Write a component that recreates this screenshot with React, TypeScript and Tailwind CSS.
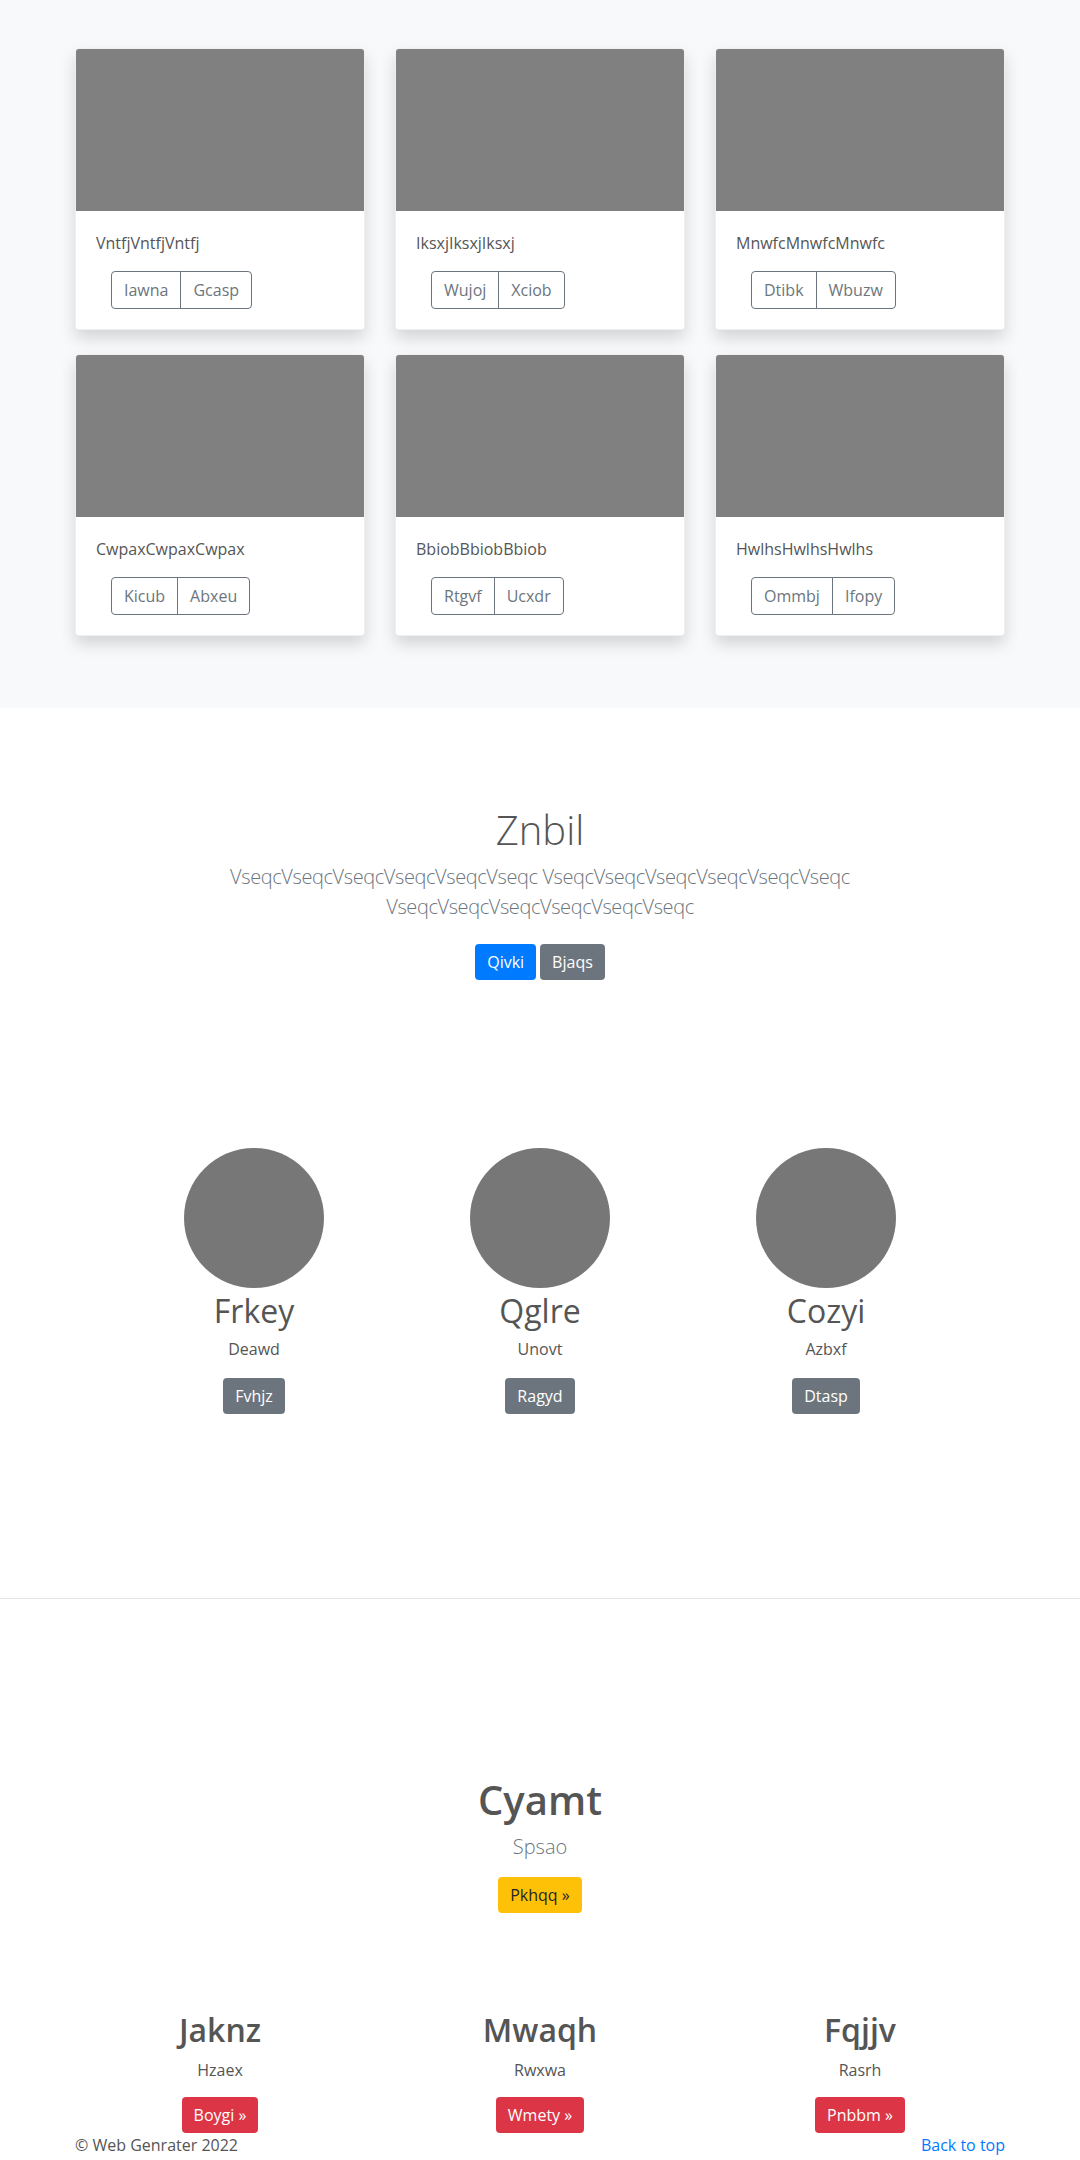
import React from 'react';

const cards = [
  { title: 'VntfjVntfjVntfj', a: 'Iawna', b: 'Gcasp' },
  { title: 'IksxjIksxjIksxj', a: 'Wujoj', b: 'Xciob' },
  { title: 'MnwfcMnwfcMnwfc', a: 'Dtibk', b: 'Wbuzw' },
  { title: 'CwpaxCwpaxCwpax', a: 'Kicub', b: 'Abxeu' },
  { title: 'BbiobBbiobBbiob', a: 'Rtgvf', b: 'Ucxdr' },
  { title: 'HwlhsHwlhsHwlhs', a: 'Ommbj', b: 'Ifopy' },
];

const people = [
  { name: 'Frkey', sub: 'Deawd', btn: 'Fvhjz' },
  { name: 'Qglre', sub: 'Unovt', btn: 'Ragyd' },
  { name: 'Cozyi', sub: 'Azbxf', btn: 'Dtasp' },
];

const features = [
  { name: 'Jaknz', sub: 'Hzaex', btn: 'Boygi »' },
  { name: 'Mwaqh', sub: 'Rwxwa', btn: 'Wmety »' },
  { name: 'Fqjjv', sub: 'Rasrh', btn: 'Pnbbm »' },
];

function AlbumCard({ title, a, b }: { title: string; a: string; b: string }) {
  return (
    <div className="mb-6 overflow-hidden rounded-[4px] border border-black/[0.06] bg-white shadow-[0_0.5rem_1rem_rgba(0,0,0,0.15)]">
      <div className="h-[162px] bg-[#808080]" />
      <div className="p-5">
        <p className="mb-4 text-base leading-6 text-[#555]">{title}</p>
        <div className="ml-[15px] inline-flex">
          <button className="rounded-l-[4px] border border-[#6c757d] px-3 py-1.5 text-base leading-6 text-[#6c757d]">
            {a}
          </button>
          <button className="-ml-px rounded-r-[4px] border border-[#6c757d] px-3 py-1.5 text-base leading-6 text-[#6c757d]">
            {b}
          </button>
        </div>
      </div>
    </div>
  );
}

export default function App() {
  return (
    <div className="min-h-[2160px] bg-white font-['Open_Sans',sans-serif] text-[#555]">
      {/* Album */}
      <section className="bg-[#f8f9fa] py-12">
        <div className="mx-auto grid w-[960px] grid-cols-3 gap-x-[30px] px-[15px]">
          {cards.map((c) => (
            <AlbumCard key={c.title} {...c} />
          ))}
        </div>
      </section>

      {/* Jumbotron */}
      <section className="pt-[98px] text-center">
        <h1 className="mb-2 text-[40px] font-light leading-[1.2] text-[#555]">Znbil</h1>
        <p className="mx-auto mb-[22px] max-w-[660px] text-xl font-light leading-[1.5] tracking-[-0.02em] text-[#6c757d]">
          VseqcVseqcVseqcVseqcVseqcVseqc VseqcVseqcVseqcVseqcVseqcVseqc VseqcVseqcVseqcVseqcVseqcVseqc
        </p>
        <div className="flex justify-center gap-1">
          <button className="rounded-[4px] bg-[#007bff] px-3 py-1.5 text-base leading-6 text-white">Qivki</button>
          <button className="rounded-[4px] bg-[#6c757d] px-3 py-1.5 text-base leading-6 text-white">Bjaqs</button>
        </div>
      </section>

      {/* Marketing circles */}
      <section className="mx-auto mt-[168px] grid w-[858px] grid-cols-3 text-center">
        {people.map((p) => (
          <div key={p.name} className="flex flex-col items-center">
            <div className="h-[140px] w-[140px] rounded-full bg-[#777]" />
            <h2 className="mt-1 mb-[7px] text-[32px] font-normal leading-[1.2] text-[#555]">{p.name}</h2>
            <p className="mb-[17px] text-base leading-6 text-[#555]">{p.sub}</p>
            <button className="rounded-[4px] bg-[#6c757d] px-3 py-1.5 text-base leading-6 text-white">{p.btn}</button>
          </div>
        ))}
      </section>

      <hr className="mt-[184px] border-t border-black/10" />

      {/* Call to action */}
      <section className="pt-[177px] text-center">
        <h1 className="mb-2 text-[40px] font-semibold leading-[1.2] text-[#555]">Cyamt</h1>
        <p className="mb-[15px] text-xl font-light leading-[1.5] text-[#6c757d]">Spsao</p>
        <button className="rounded-[4px] bg-[#ffc107] px-3 py-1.5 text-base leading-6 text-[#212529]">Pkhqq »</button>
      </section>

      <section className="mx-auto mt-[98px] grid w-[960px] grid-cols-3 text-center">
        {features.map((f) => (
          <div key={f.name} className="flex flex-col items-center px-[15px]">
            <h2 className="mb-2 text-[32px] font-semibold leading-[1.2] text-[#555]">{f.name}</h2>
            <p className="mb-[15px] text-base leading-6 text-[#555]">{f.sub}</p>
            <button className="rounded-[4px] bg-[#dc3545] px-3 py-1.5 text-base leading-6 text-white">{f.btn}</button>
          </div>
        ))}
      </section>

      <footer className="mx-auto flex w-[960px] justify-between px-[15px] text-base leading-6">
        <p className="text-[#555]">© Web Genrater 2022</p>
        <a href="#" className="text-[#007bff]">
          Back to top
        </a>
      </footer>
    </div>
  );
}
